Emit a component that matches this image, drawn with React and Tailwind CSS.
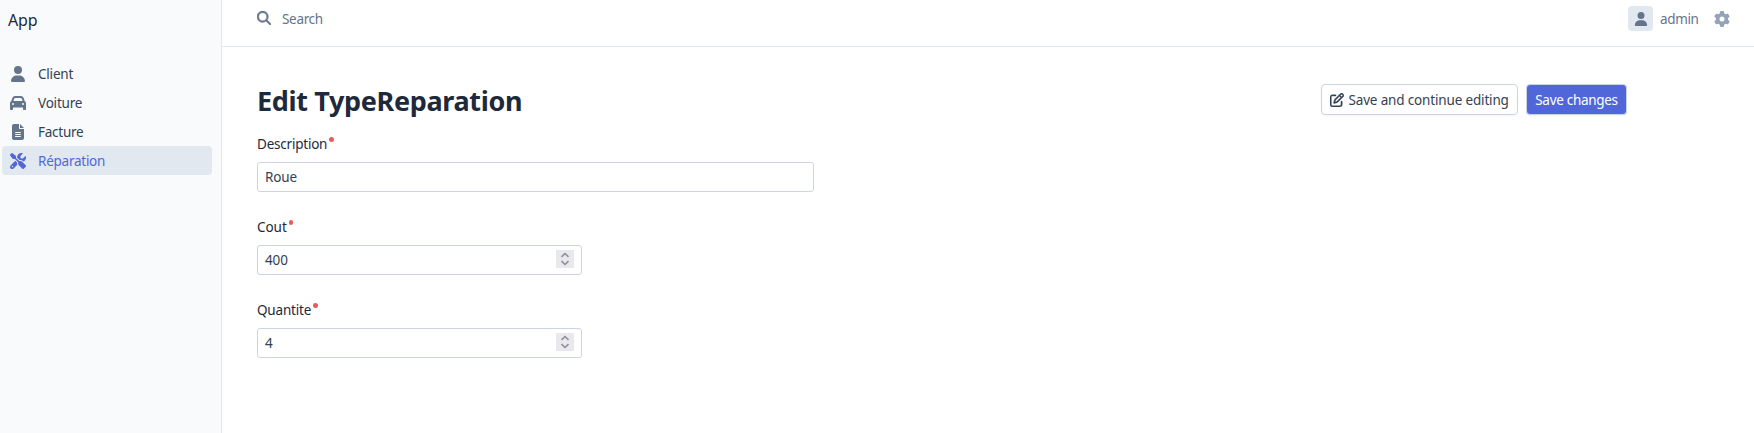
import {
  FaUser,
  FaCar,
  FaFileLines,
  FaScrewdriverWrench,
  FaMagnifyingGlass,
  FaGear,
  FaRegPenToSquare,
} from 'react-icons/fa6';

const menu = [
  { label: 'Client', Icon: FaUser, tracking: 'tracking-[-0.2px]' },
  { label: 'Voiture', Icon: FaCar, tracking: 'tracking-[-0.2px]' },
  { label: 'Facture', Icon: FaFileLines, tracking: 'tracking-[-0.25px]' },
  { label: 'Réparation', Icon: FaScrewdriverWrench, tracking: 'tracking-[-0.25px]', active: true },
];

function Sidebar() {
  return (
    <aside className="w-[222px] shrink-0 border-r border-slate-200 bg-[#f8fafc] pt-2">
      <div className="pl-2 text-[16px] leading-6 tracking-[-0.1px] text-[#1e293b]">App</div>
      <nav className="mt-[27px] flex flex-col pl-0.5 pr-[9px]">
        {menu.map(({ label, Icon, tracking, active }) => (
          <a
            key={label}
            className={
              'flex h-[29px] items-center gap-3 rounded pl-2 ' +
              tracking +
              (active ? ' bg-[#e2e8f0] text-[#5167d9]' : ' text-[#334155]')
            }
          >
            <Icon className={active ? 'mt-px size-4' : 'mt-px size-4 text-[#64748b]'} />
            <span className="pt-0.5 leading-[29px]">{label}</span>
          </a>
        ))}
      </nav>
    </aside>
  );
}

function TopBar() {
  return (
    <header className="flex h-[47px] items-start justify-between border-b border-[#e2e8f0] pl-[35px] pr-6 text-[#64748b]">
      <div className="flex items-start pt-2">
        <FaMagnifyingGlass className="mt-[3px] size-[14px]" stroke="currentColor" strokeWidth="14" />
        <span className="ml-[11px] pt-px leading-5 tracking-[-0.32px]">Search</span>
      </div>
      <div className="flex items-start pt-[6px]">
        <span className="flex size-[25px] items-center justify-center rounded bg-[#e2e8f0]">
          <FaUser className="size-[14px]" />
        </span>
        <span className="ml-[7px] w-10 pt-px leading-[25px] tracking-[-0.35px]">admin</span>
        <FaGear className="ml-[14px] mt-[5px] size-4 text-[#94a3b8]" />
      </div>
    </header>
  );
}

function Stepper() {
  return (
    <span className="mt-1 flex h-[18px] w-[18px] bg-[#e8e8ed]">
      <svg viewBox="0 0 18 18" className="size-[18px]" fill="none" stroke="#8f8f9d" strokeWidth="1.6">
        <path d="M5.5 6.8 L9 3.5 L12.5 6.8 M5.5 11.2 L9 14.5 L12.5 11.2" />
      </svg>
    </span>
  );
}

function Field({ label, value, tracking, width, numeric }) {
  return (
    <div className="h-[83px]">
      <div className="flex h-5 items-start text-[#1e293b]">
        <span className={'leading-5 ' + tracking}>{label}</span>
        <span className="ml-[2px] mt-[3px] size-[4.5px] rounded-full bg-[#eb5a5a]" />
      </div>
      <div
        className={
          'mt-2 flex h-[30px] items-start justify-between rounded-[3px] border border-[#cbd5e1] px-[7px] text-[#334155] ' + width
        }
      >
        <span className="leading-7 tracking-[-0.15px]">{value}</span>
        {numeric && <Stepper />}
      </div>
    </div>
  );
}

export default function App() {
  return (
    <div className="flex h-[433px] w-full overflow-hidden bg-white font-['Noto_Sans',sans-serif] text-[13.5px]">
      <Sidebar />
      <div className="flex min-w-0 flex-1 flex-col">
        <TopBar />
        <main className="pl-[35px] pr-[127px] pt-[37px]">
          <div className="flex h-[34px] items-start justify-between">
            <h1 className="text-[27px] font-bold leading-[34px] tracking-[-0.34px] text-[#1e293b]">
              Edit TypeReparation
            </h1>
            <div className="flex gap-2">
              <button className="flex h-[31px] w-[197px] items-center whitespace-nowrap rounded border border-[#cbd5e1] pl-2 text-[#334155] shadow-xs">
                <FaRegPenToSquare className="size-[14px] shrink-0" stroke="currentColor" strokeWidth="14" />
                <span className="ml-[4.5px] pt-0.5 leading-[29px] tracking-[-0.16px]">Save and continue editing</span>
              </button>
              <button className="h-[31px] w-[101px] whitespace-nowrap rounded border border-[#cbd5e1] bg-[#5167d9] text-center leading-[31px] tracking-[-0.3px] text-white shadow-xs">
                Save changes
              </button>
            </div>
          </div>
          <form className="mt-4">
            <Field label="Description" value="Roue" width="w-[557px]" tracking="tracking-[-0.22px]" />
            <Field label="Cout" value="400" width="w-[325px]" tracking="tracking-[-0.05px]" numeric />
            <Field label="Quantite" value="4" width="w-[325px]" tracking="tracking-[-0.18px]" numeric />
          </form>
        </main>
      </div>
    </div>
  );
}
